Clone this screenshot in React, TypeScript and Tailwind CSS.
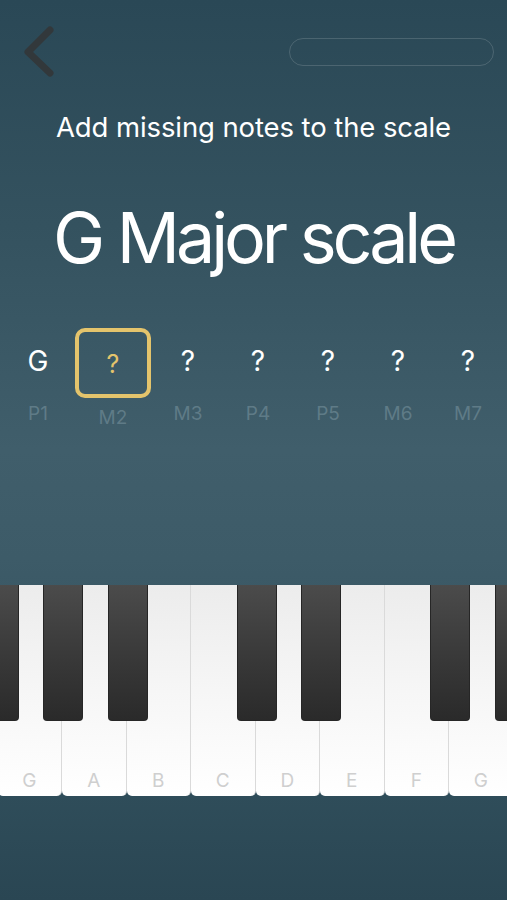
import React from "react";

const notes = [
  { n: "G", l: "P1" },
  { n: "?", l: "M2", active: true },
  { n: "?", l: "M3" },
  { n: "?", l: "P4" },
  { n: "?", l: "P5" },
  { n: "?", l: "M6" },
  { n: "?", l: "M7" },
];

const whites = ["G", "A", "B", "C", "D", "E", "F", "G"];
const blackIdx = [0, 1, 2, 4, 5, 7, 8];
const KW = 64.5;
const START = -2.5;

export default function App() {
  return (
    <div
      className="relative w-[507px] h-[900px] overflow-hidden flex flex-col bg-[linear-gradient(180deg,#2a4856_0%,#34525f_25%,#405e6b_50%,#3d5b68_62%,#2f4d5a_88%,#2a4653_100%)]"
      style={{ fontFamily: "Inter, 'Noto Sans', sans-serif" }}
    >
      {/* header */}
      <div className="h-[100px] flex justify-between items-start shrink-0">
        <svg className="ml-[20px] mt-[24px]" width="40" height="56" viewBox="0 0 40 56">
          <path d="M30 6 L8 28 L30 49" fill="none" stroke="#32383b" strokeWidth="7" strokeLinecap="round" strokeLinejoin="round" />
        </svg>
        <div className="mt-[38px] mr-[13px] w-[205px] h-[28px] rounded-full border-[1.5px] border-white/15" />
      </div>

      {/* subtitle */}
      <div className="h-[54px] shrink-0 text-center text-white text-[27.5px] leading-[54px] tracking-[-0.1px]">
        Add missing notes to the scale
      </div>

      {/* title */}
      <div className="mt-[27px] h-[114px] shrink-0 text-center text-white text-[70px] leading-[114px] tracking-[-4.1px]">
        G Major scale
      </div>

      {/* notes */}
      <div className="mt-[33px] flex pl-[3px] shrink-0">
        {notes.map((x, i) => (
          <div key={i} className={`flex flex-col items-center ${x.active ? "w-[80px]" : "w-[70px]"}`}>
            {x.active ? (
              <div className="w-[76px] h-[70px] rounded-[10px] border-[4px] border-[#e4c46c] flex items-center justify-center text-[#e4c46c] text-[25px] pt-[4px]">
                ?
              </div>
            ) : (
              <div className="h-[70px] flex items-center justify-center text-white text-[28px] pb-[4px]">{x.n}</div>
            )}
            <div className={`text-[19px] text-[#5f7b87] leading-[20px] ${x.active ? "mt-[10px]" : "mt-[6px]"}`}>{x.l}</div>
          </div>
        ))}
      </div>

      <div className="flex-1" />

      {/* piano */}
      <div className="relative h-[211px] shrink-0 mb-[104px]">
        <div className="absolute top-0 bottom-0 flex" style={{ left: START }}>
          {whites.map((w, i) => (
            <div
              key={i}
              className="w-[64.5px] h-full rounded-b-[5px] bg-[linear-gradient(180deg,#ececec_0%,#f6f6f6_50%,#ffffff_100%)] border-r border-[#dadada] flex items-end justify-center pb-[3px]"
            >
              <span className="text-[19px] text-[#cfcfcf] leading-[24px]">{w}</span>
            </div>
          ))}
        </div>
        {blackIdx.map((b) => (
          <div
            key={b}
            className="absolute top-0 w-[40px] h-[136px] rounded-b-[4px] bg-[linear-gradient(180deg,#4b4b4b_0%,#3a3a3a_50%,#2a2a2a_100%)] border border-[#262626] border-t-0"
            style={{ left: START + KW * b - 19 }}
          />
        ))}
      </div>
    </div>
  );
}
